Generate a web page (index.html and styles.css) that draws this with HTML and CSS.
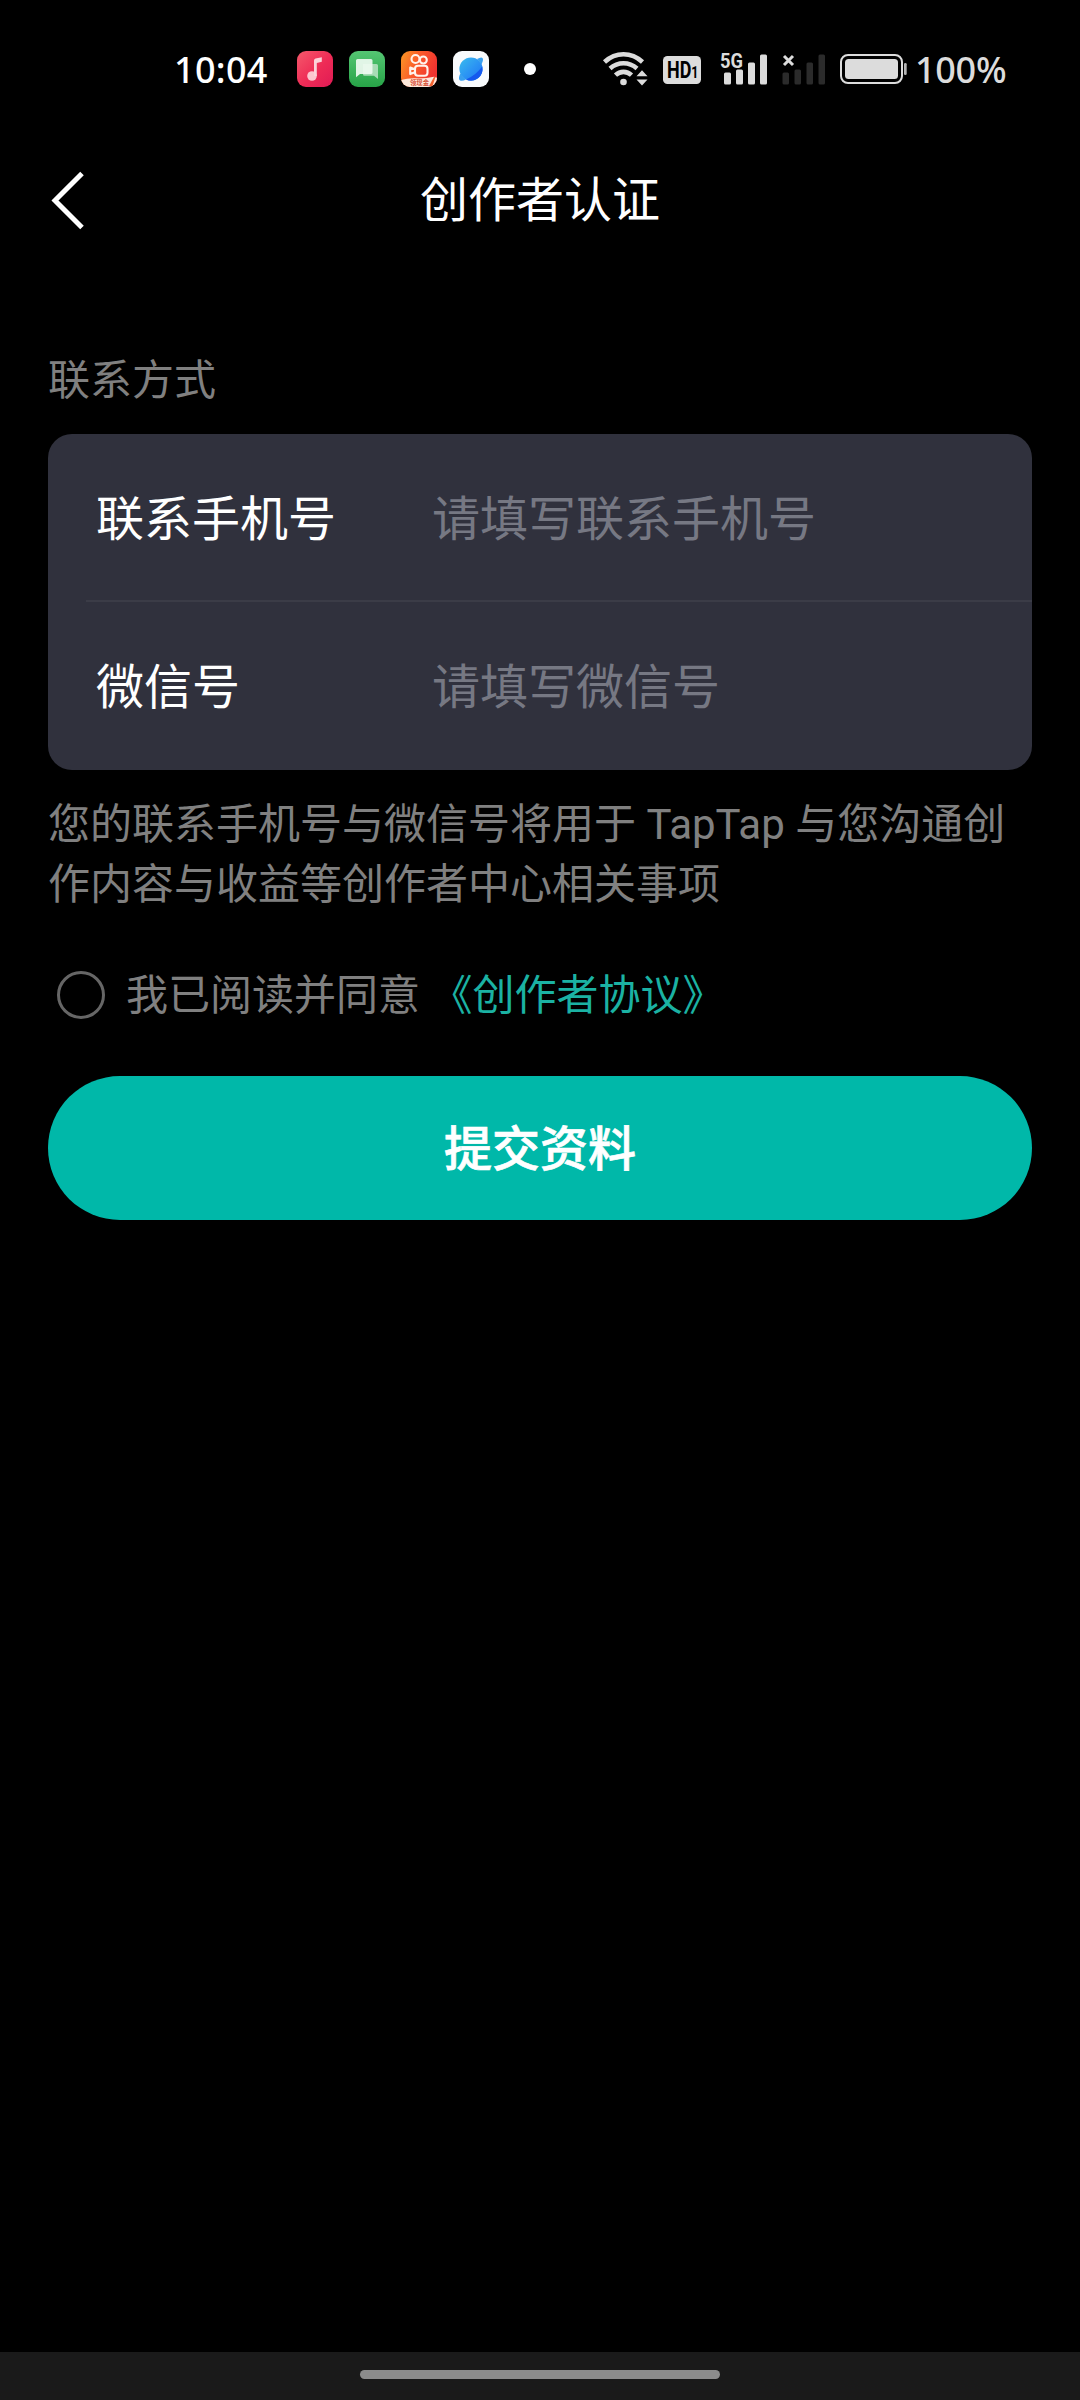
FILE: index.html
```html
<!DOCTYPE html>
<html lang="zh-CN">
<head>
<meta charset="utf-8">
<title>创作者认证</title>
<link rel="stylesheet" href="styles.css">
</head>
<body>
<div class="screen">
  <div class="status">
    <span class="clock">10:04</span>
    <div class="apps">
      <svg class="app" viewBox="0 0 36 36">
        <defs><linearGradient id="red" x1="0" y1="0" x2="1" y2="1"><stop offset="0" stop-color="#f5596b"/><stop offset=".55" stop-color="#ee2b56"/><stop offset="1" stop-color="#e01a55"/></linearGradient></defs>
        <rect width="36" height="36" rx="9" fill="url(#red)"/>
        <circle cx="15" cy="25" r="4.8" fill="#fcc6cf"/>
        <path d="M17 25V9.500q0-1.500 1.500-1.900l6.300-1.400v4.600l-5 1.200V25z" fill="#fcd3da"/>
      </svg>
      <svg class="app" viewBox="0 0 36 36">
        <defs><linearGradient id="green" x1="0" y1="0" x2="0" y2="1"><stop offset="0" stop-color="#55c673"/><stop offset="1" stop-color="#27a347"/></linearGradient></defs>
        <rect width="36" height="36" rx="9" fill="url(#green)"/>
        <path d="M14 13h13.500q1.500 0 1.500 1.500V28l-4-3.300H15.500q-1.500 0-1.500-1.500z" fill="#a9dcb6"/>
        <path d="M8.500 8H22q1.500 0 1.500 1.500v12q0 1.500-1.500 1.500H11l-4 3.200V9.500Q7 8 8.500 8z" fill="#effaf1" fill-opacity=".92"/>
      </svg>
      <svg class="app" viewBox="0 0 36 36">
        <defs>
          <linearGradient id="orange" x1="0" y1="0" x2="1" y2="0.4"><stop offset="0" stop-color="#fb9a25"/><stop offset=".5" stop-color="#fa5a2a"/><stop offset="1" stop-color="#ef3230"/></linearGradient>
          <clipPath id="tile"><rect width="36" height="36" rx="9"/></clipPath>
        </defs>
        <g clip-path="url(#tile)">
          <rect width="36" height="36" fill="url(#orange)"/>
          <path d="M0 29q7-2 14-1.700q10 .5 19-1.600l3 1V36H0z" fill="#fde9dc"/>
          <text class="banner" x="9" y="34.200" textLength="19" lengthAdjust="spacingAndGlyphs">领现金</text>
          <path d="M28 35l5-9 1.500 0-3 9z" fill="#f4622f"/>
        </g>
        <g fill="none" stroke="#fff3ec" stroke-width="2.100">
          <circle cx="14.500" cy="8" r="4"/><circle cx="22.300" cy="9" r="3.500"/>
          <rect x="14" y="14.800" width="12.500" height="10" rx="3"/>
          <path d="M14 18.300l-4.800-1.800v6.600l4.800-1.800" stroke-linejoin="round"/>
        </g>
      </svg>
      <svg class="app" viewBox="0 0 36 36">
        <defs><linearGradient id="blue" x1="0.100" y1="0.100" x2="0.900" y2="0.900"><stop offset="0" stop-color="#37b5ee"/><stop offset=".55" stop-color="#2b93f4"/><stop offset="1" stop-color="#1f7cf2"/></linearGradient></defs>
        <rect width="36" height="36" rx="9" fill="#f8fafc"/>
        <circle cx="18" cy="18" r="11.600" fill="url(#blue)"/>
        <path d="M29.200 15.500C25 21 20 25.500 13 28.500A11.600 11.600 0 0 0 29.200 15.500z" fill="#1558ee"/>
        <path d="M24 8q5.500-3 6 0q.3 2-1.500 5.500zM7.300 22.500q-2.500 5.500-.3 7q2.500 1 6-1z" fill="#39a0ef"/>
      </svg>
    </div>
    <span class="dot"></span>
    <div class="signals">
      <svg class="wifi" viewBox="0 0 46 36" fill="none" stroke="#dcdcdc" stroke-width="4.600">
        <path d="M1.500 11Q10 3.300 20.500 3.300T39.500 11"/>
        <path d="M7 17.500Q13 12.300 20.500 12.300T34 17.500"/>
        <path d="M12.500 24.200Q16 20.900 20.500 20.900T28.500 24.200"/>
        <circle cx="20.500" cy="31" r="3.300" fill="#dcdcdc" stroke="none"/>
        <path d="M33.500 25.200l5.500-6 5.500 6zM33.500 28.500l5.500 6 5.500-6z" fill="#dcdcdc" stroke="none"/>
      </svg>
      <svg class="hd" viewBox="0 0 38 28">
        <rect width="38" height="28" rx="4.500" fill="#dcdcdc"/>
        <text class="hd-text" x="4" y="22" textLength="31.500" lengthAdjust="spacingAndGlyphs">HD<tspan class="hd-sub">1</tspan></text>
      </svg>
      <svg class="cell" viewBox="0 0 46 34" fill="#dcdcdc">
        <text class="net" x="-1" y="15.500" textLength="23" lengthAdjust="spacingAndGlyphs">5G</text>
        <rect x="3" y="20.500" width="7" height="12" rx="1.500"/><rect x="15" y="17.500" width="7" height="15" rx="1.500"/><rect x="27" y="10.500" width="7" height="22" rx="1.500"/><rect x="39" y="2.500" width="7" height="30" rx="1.500"/>
      </svg>
      <svg class="cell none" viewBox="0 0 44 34" fill="#2b2b2b">
        <path d="M2 4l9 9M11 4l-9 9" stroke="#dcdcdc" stroke-width="3"/>
        <rect x=".500" y="20.500" width="6.500" height="12" rx="1.500"/><rect x="12.500" y="17.500" width="6.500" height="15" rx="1.500"/><rect x="24.500" y="10.500" width="6.500" height="22" rx="1.500"/><rect x="36.500" y="2.500" width="6.500" height="30" rx="1.500"/>
      </svg>
      <svg class="battery" viewBox="0 0 67 30">
        <rect x="1" y="1" width="61" height="28" rx="7" fill="none" stroke="#dcdcdc" stroke-width="2"/>
        <rect x="5" y="5" width="53" height="20" rx="3.500" fill="#dcdcdc"/>
        <rect x="64" y="9" width="2.700" height="12" rx="1.300" fill="#b4b4b4"/>
      </svg>
    </div>
    <span class="percent">100%</span>
  </div>

  <header class="bar">
    <svg class="back" viewBox="0 0 34 60"><path d="M31 2.500L4 29.500L31 56.500" fill="none" stroke="#fff" stroke-width="5"/></svg>
    <h1 class="title">创作者认证</h1>
  </header>

  <main class="content">
    <h2 class="section">联系方式</h2>
    <div class="card">
      <div class="row"><span class="label">联系手机号</span><span class="hint">请填写联系手机号</span></div>
      <div class="row"><span class="label">微信号</span><span class="hint">请填写微信号</span></div>
    </div>
    <p class="note">您的联系手机号与微信号将用于 TapTap 与您沟通创作内容与收益等创作者中心相关事项</p>
    <div class="agree"><span class="radio"></span><span class="consent">我已阅读并同意 <a class="link">《创作者协议》</a></span></div>
    <button class="submit">提交资料</button>
  </main>

  <footer class="nav"><span class="pill"></span></footer>
</div>
</body>
</html>
```
FILE: styles.css
```css
* { box-sizing: border-box; }
body { margin: 0; background: #000; font-family: Roboto, "Noto Sans CJK SC", sans-serif; }
.screen { width: 1080px; height: 2400px; display: flex; flex-direction: column; background: #000; color: #fff; }

.status { height: 138px; display: flex; align-items: center; padding-left: 174px; font-family: "Noto Sans", sans-serif; font-size: 36px; font-weight: 500; }
.clock { width: 123px; line-height: 48px; padding-top: 2px; letter-spacing: 0.3px; }
.apps { display: flex; gap: 16px; }
.app { width: 36px; height: 36px; display: block; }
.dot { width: 12px; height: 12px; border-radius: 50%; background: #fff; margin-left: 35px; }
.signals { display: flex; align-items: flex-start; height: 34px; margin-left: 67px; }
.signals svg { display: block; flex: none; overflow: visible; }
.wifi { width: 46px; height: 36px; margin-top: -1px; }
.hd { width: 38px; height: 28px; margin: 4px 0 0 14px; }
.cell { width: 46px; height: 34px; margin: 0 0 0 20px; }
.cell.none { width: 44px; margin-left: 15px; }
.battery { width: 67px; height: 30px; margin: 2px 0 0 14px; }
.percent { margin-left: 8px; padding-top: 2px; color: #dcdcdc; line-height: 48px; letter-spacing: -0.3px; }
.hd-text { font: 700 23px Roboto, sans-serif; fill: #000; }
.hd-sub { font-size: 16px; }
.net { font: 700 21px Roboto, sans-serif; fill: #dcdcdc; }
.banner { font: 700 7px "Noto Sans CJK SC", sans-serif; fill: #d8553c; }

.bar { height: 126px; display: grid; grid-template-columns: 1fr auto 1fr; align-items: center; padding: 0 51px; }
.back { width: 34px; height: 60px; }
.title { margin: 0; font-size: 48px; font-weight: 400; line-height: 60px; }

.content { flex: 1; padding: 87px 48px 0; display: flex; flex-direction: column; }
.section { margin: 0; font-size: 42px; font-weight: 400; line-height: 60px; color: #808080; }
.card { margin-top: 23px; height: 336px; border-radius: 24px; background: #30313d; overflow: hidden; }
.row { height: 168px; margin-left: 38px; padding: 4px 0 0 10px; display: flex; align-items: center; font-size: 48px; line-height: 60px; }
.row:first-child { padding-top: 6px; border-bottom: 2px solid #3b3c47; }
.label { width: 336px; }
.hint { color: #767883; }
.note { margin: 25px 0 0; font-size: 42px; line-height: 60px; color: #808080; }
.agree { margin-top: 50px; height: 60px; padding-left: 9px; display: flex; align-items: center; font-size: 42px; line-height: 60px; color: #808080; }
.radio { width: 48px; height: 48px; border: 3px solid #666; border-radius: 50%; margin-right: 21px; }
.consent { padding-top: 2px; }
.link { color: #1bb2a3; }
.submit { margin-top: 51px; height: 144px; padding: 4px 0 0; border: 0; border-radius: 72px; background: #00b8a9; color: #fff; font: 500 48px/60px Roboto, "Noto Sans CJK SC", sans-serif; -webkit-text-stroke: 0.7px #fff; }

.nav { height: 48px; background: #1a1a1a; display: flex; justify-content: center; padding-top: 18px; }
.pill { width: 360px; height: 9px; border-radius: 5px; background: #8c8c8c; }
```
